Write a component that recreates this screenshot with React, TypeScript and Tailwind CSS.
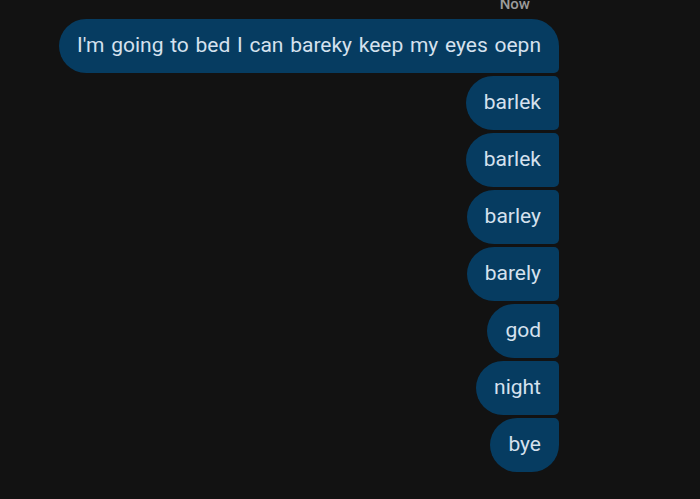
import React from "react";

const messages = [
  "I'm going to bed I can bareky keep my eyes oepn",
  "barlek",
  "barlek",
  "barley",
  "barely",
  "god",
  "night",
  "bye",
];

function bubbleShape(i: number, total: number) {
  if (i === 0) return "rounded-l-[27px] rounded-tr-[27px] rounded-br-[5px]";
  if (i === total - 1) return "rounded-l-[27px] rounded-tr-[5px] rounded-br-[27px]";
  return "rounded-l-[27px] rounded-r-[5px]";
}

export default function App() {
  return (
    <div
      className="w-[700px] h-[499px] overflow-hidden bg-[#121212] pr-[141px]"
      style={{ fontFamily: "Roboto, 'Noto Sans', sans-serif" }}
    >
      <div className="flex flex-col items-end gap-[3px]">
        <div className="mt-[-4px] mr-[29px] h-[20px] text-[15px] font-medium text-[#9b9b9b] leading-[17px]">
          Now
        </div>
        {messages.map((text, i) => (
          <div
            key={i}
            className={`h-[54px] flex items-center px-[18px] bg-[#063c61] text-[#d5e1ee] text-[21px] [word-spacing:1.5px] ${bubbleShape(i, messages.length)}`}
          >
            {text}
          </div>
        ))}
      </div>
    </div>
  );
}
